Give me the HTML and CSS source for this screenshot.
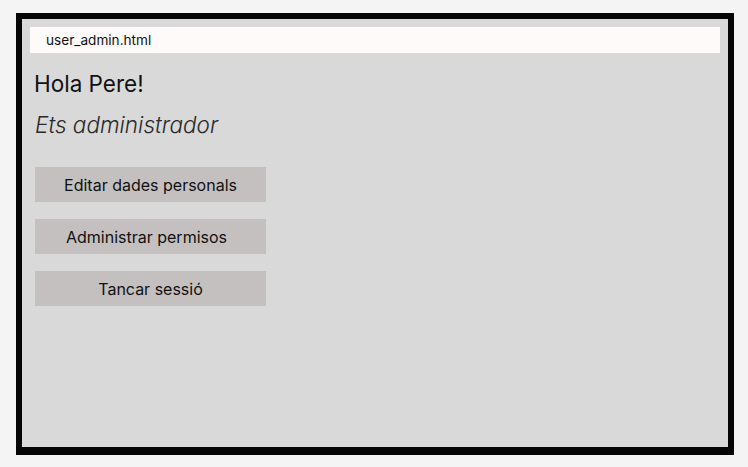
FILE: index.html
```html
<!DOCTYPE html>
<html lang="ca">
<head>
<meta charset="utf-8">
<title>user_admin.html</title>
<link rel="stylesheet" href="styles.css">
</head>
<body>
<div class="frame">
  <div class="screen">
    <div class="address">user_admin.html</div>
    <h1 class="greet">Hola Pere!</h1>
    <p class="role">Ets administrador</p>
    <div class="actions">
      <button class="btn">Editar dades personals</button>
      <button class="btn btn-shift">Administrar permisos</button>
      <button class="btn">Tancar sessió</button>
    </div>
  </div>
</div>
</body>
</html>
```

FILE: styles.css
```css
html, body {
  margin: 0;
  padding: 0;
  background: #f4f4f4;
  font-family: Inter, "Noto Sans", sans-serif;
  color: #111;
}
body {
  padding: 13px 14px 0 16px;
}
.frame {
  width: 706px;
  height: 428px;
  border: solid #050505;
  border-width: 6px 6px 8px 6px;
  background: #d9d9d9;
}
.screen {
  padding: 8px 8px 0 8px;
  display: flex;
  flex-direction: column;
}
.address {
  height: 26px;
  background: #fffafa;
  font-size: 13.6px;
  line-height: 26px;
  padding-left: 16px;
  color: #111;
}
.greet {
  margin: 17px 0 0 4px;
  font-size: 22.5px;
  font-weight: 400;
  line-height: 28px;
}
.role {
  margin: 13px 0 0 5px;
  font-size: 22.5px;
  font-style: italic;
  font-weight: 300;
  line-height: 28px;
  color: #2a2a2a;
}
.actions {
  display: flex;
  flex-direction: column;
  gap: 17px;
  margin: 28px 0 0 5px;
  width: 231px;
}
.btn {
  height: 35px;
  border: none;
  background: #c4c0c0;
  font-family: Inter, "Noto Sans", sans-serif;
  font-size: 16px;
  color: #111;
  padding: 0;
  text-align: center;
}
.btn-shift {
  padding-right: 8px;
}
```
